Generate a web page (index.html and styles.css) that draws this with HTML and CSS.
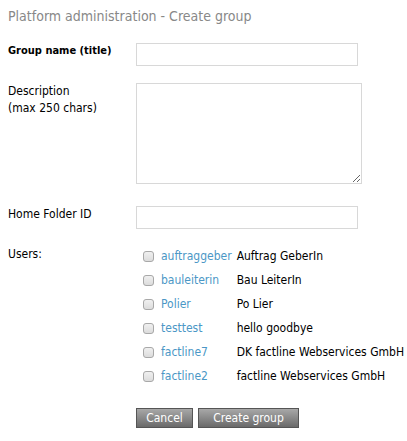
FILE: index.html
```html
<!DOCTYPE html>
<html lang="en">
<head>
    <meta charset="UTF-8">
    <title>Platform administration - Create group</title>
    <link rel="stylesheet" href="styles.css">
</head>
<body>
    <h1 class="page-title">Platform administration - Create group</h1>

    <form class="group-form">
        <div class="form-row row-title">
            <label class="field-label strong" for="title">Group name (title)</label>
            <input type="text" id="title" class="text-input">
        </div>

        <div class="form-row row-desc">
            <label class="field-label" for="desc">Description<br>(max 250 chars)</label>
            <textarea id="desc" class="text-area"></textarea>
        </div>

        <div class="form-row row-folder">
            <label class="field-label" for="folder">Home Folder ID</label>
            <input type="text" id="folder" class="text-input">
        </div>

        <div class="form-row row-users">
            <div class="field-label users-label">Users:</div>
            <table class="user-list">
                <tr><td><input type="checkbox" class="check"></td><td><a href="#">auftraggeber</a></td><td>Auftrag GeberIn</td></tr>
                <tr><td><input type="checkbox" class="check"></td><td><a href="#">bauleiterin</a></td><td>Bau LeiterIn</td></tr>
                <tr><td><input type="checkbox" class="check"></td><td><a href="#">Polier</a></td><td>Po Lier</td></tr>
                <tr><td><input type="checkbox" class="check"></td><td><a href="#">testtest</a></td><td>hello goodbye</td></tr>
                <tr><td><input type="checkbox" class="check"></td><td><a href="#">factline7</a></td><td>DK factline Webservices GmbH</td></tr>
                <tr><td><input type="checkbox" class="check"></td><td><a href="#">factline2</a></td><td>factline Webservices GmbH</td></tr>
            </table>
        </div>

        <div class="form-row row-buttons">
            <div class="field-label"></div>
            <div class="buttons">
                <button type="button" class="btn btn-cancel">Cancel</button>
                <button type="submit" class="btn btn-create">Create group</button>
            </div>
        </div>
    </form>
</body>
</html>
```

FILE: styles.css
```css
body {
    margin: 0;
    padding: 8px 8px;
    font-family: "DejaVu Sans Condensed", "DejaVu Sans", sans-serif;
    font-size: 12px;
    color: #000;
    background: #fff;
}
.page-title {
    margin: 0 0 19px;
    font-size: 14px;
    line-height: 16px;
    font-weight: normal;
    color: #888;
}
.form-row {
    display: flex;
    align-items: flex-start;
}
.row-desc { margin-top: 17px; }
.row-folder { margin-top: 22px; }
.row-users { margin-top: 15px; }
.row-buttons { margin-top: 20px; }

.field-label {
    flex: 0 0 128px;
    line-height: 17px;
}
.strong {
    line-height: 15px;
    font-size: 11px;
    font-weight: bold;
}
.users-label {
    padding-top: 2px;
}
.text-input {
    display: block;
    box-sizing: border-box;
    width: 222px;
    height: 23px;
    margin: 0;
    border: 1px solid #d8d8d8;
    padding: 2px 4px;
}
.text-area {
    display: block;
    box-sizing: border-box;
    width: 226px;
    height: 101px;
    margin: 0;
    border: 1px solid #d8d8d8;
    resize: vertical;
}
.user-list {
    border-collapse: collapse;
    margin-left: 7px;
}
.user-list td {
    padding: 0;
    height: 24px;
    white-space: nowrap;
}
.user-list td:nth-child(2) {
    padding-right: 5px;
    min-width: 68px;
}
.user-list a {
    color: #4b97c6;
    text-decoration: none;
}
.check {
    appearance: none;
    display: block;
    width: 11px;
    height: 11px;
    margin: 0 7px 0 0;
    border: 1px solid #a8a8a8;
    border-radius: 3px;
    background: linear-gradient(#f0f0f0, #dcdcdc);
}
.buttons {
    display: flex;
    gap: 5px;
}
.btn {
    height: 20px;
    padding: 0;
    border: 1px solid #555;
    background: linear-gradient(#a8a8a8, #6a6a6a);
    color: #fff;
    font-family: inherit;
    font-size: 12px;
}
.btn-cancel { width: 57px; }
.btn-create { width: 101px; }
```
